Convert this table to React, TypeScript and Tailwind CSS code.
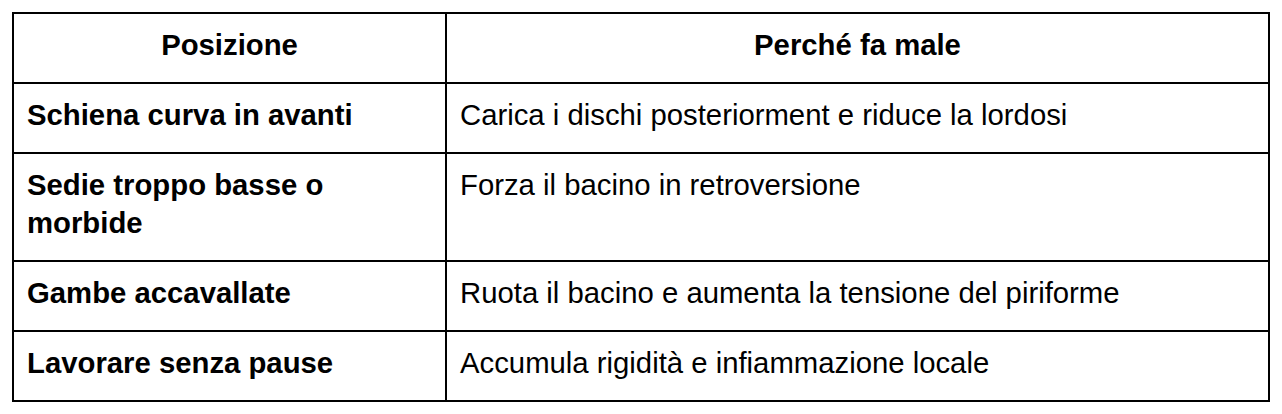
import React from "react";

const rows = [
  ["Schiena curva in avanti", "Carica i dischi posteriorment e riduce la lordosi"],
  ["Sedie troppo basse o morbide", "Forza il bacino in retroversione"],
  ["Gambe accavallate", "Ruota il bacino e aumenta la tensione del piriforme"],
  ["Lavorare senza pause", "Accumula rigidità e infiammazione locale"],
];

const App = () => {
  return (
    <div className="min-h-[414px] bg-white pt-3 pl-3 font-['Liberation_Sans',Arial,sans-serif] text-[29.3px] leading-[38px] text-black">
      <table className="w-[1258px] table-fixed border-collapse border-2 border-black">
        <colgroup>
          <col className="w-[433px]" />
          <col />
        </colgroup>
        <thead>
          <tr>
            <th className="border-2 border-black px-[13px] pt-[12px] pb-[18px] text-center font-bold">
              Posizione
            </th>
            <th className="border-2 border-black px-[13px] pt-[12px] pb-[18px] text-center font-bold">
              Perché fa male
            </th>
          </tr>
        </thead>
        <tbody>
          {rows.map(([pos, why]) => (
            <tr key={pos}>
              <td className="border-2 border-black px-[13px] pt-[12px] pb-[18px] align-top font-bold">
                {pos}
              </td>
              <td className="border-2 border-black px-[13px] pt-[12px] pb-[18px] align-top">
                {why}
              </td>
            </tr>
          ))}
        </tbody>
      </table>
    </div>
  );
};

export default App;
